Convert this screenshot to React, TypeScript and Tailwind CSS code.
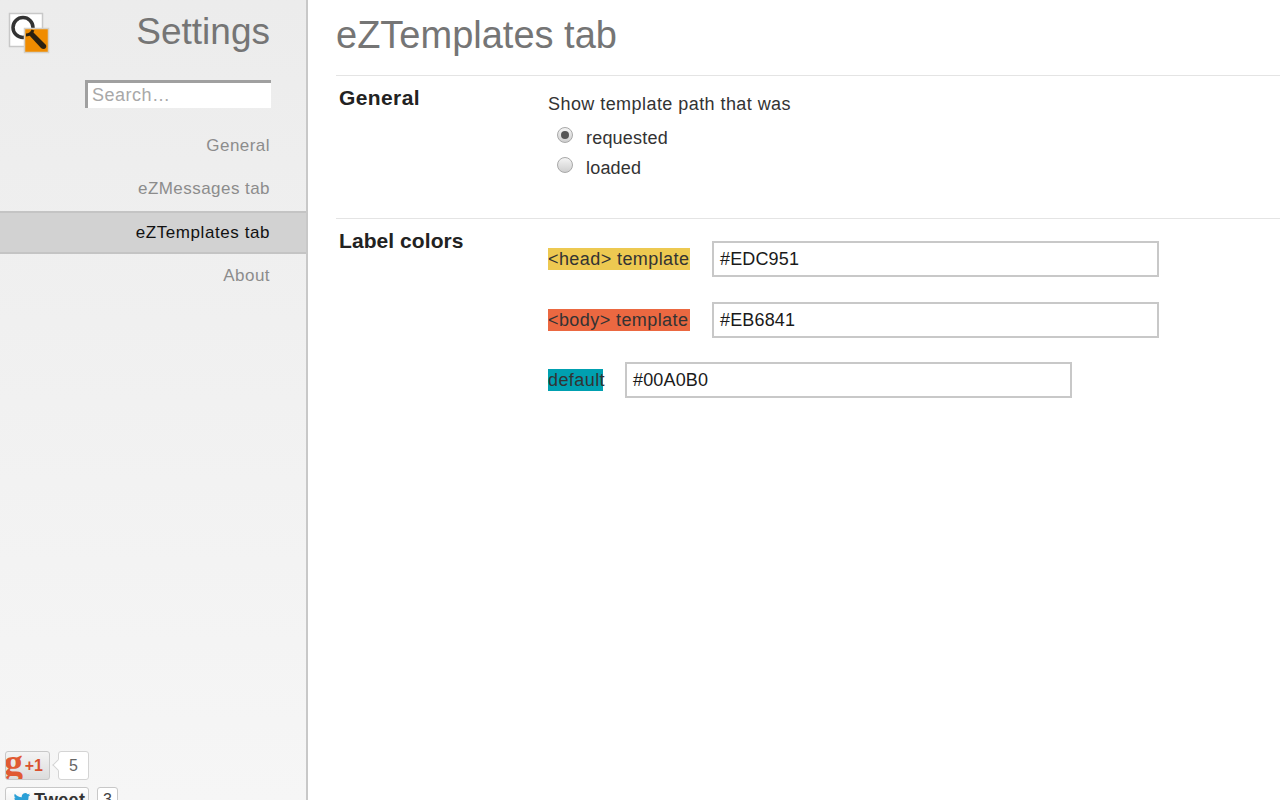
import React from "react";

function Logo() {
  return (
    <svg width="42" height="42" viewBox="0 0 42 42" className="absolute left-[8px] top-[12px]">
      <rect x="1.500" y="1.500" width="33" height="33" fill="#fff" stroke="#c8c8c8" strokeWidth="1.500" />
      <circle cx="15" cy="15.500" r="10" fill="none" stroke="#333" strokeWidth="3.500" />
      <rect x="16.500" y="16.500" width="24" height="24" fill="#f08c00" stroke="#d4d0c8" strokeWidth="1.500" />
      <path d="M18 23 Q23 23 25 18" fill="none" stroke="#2a2010" strokeWidth="3" />
      <path d="M21 23 L25 20 L38 33 Q39 36 36 37 Q34 37 33 36 Z" fill="#2a2010" />
    </svg>
  );
}

function Radio({ checked }: { checked?: boolean }) {
  return (
    <span className="mb-[6px] w-[16px] h-[16px] rounded-full border border-[#a8a8a8] bg-gradient-to-b from-[#f4f4f4] to-[#cfcfcf] flex items-center justify-center shrink-0">
      {checked && <span className="w-[8px] h-[8px] rounded-full bg-[#555]" />}
    </span>
  );
}

function NavItem({ label, active }: { label: string; active?: boolean }) {
  return (
    <div
      className={
        active
          ? "mt-[1px] h-[43px] border-y-2 border-[#c4c4c4] bg-[#d2d2d2] text-[#111] flex items-center justify-end pr-[36px] text-[17px] tracking-[0.57px]"
          : "h-[43px] text-[#8c8c8c] flex items-center justify-end pr-[36px] text-[17px] tracking-[0.45px]"
      }
    >
      {label}
    </div>
  );
}

function ColorRow({ label, bg, value, w }: { label: string; bg: string; value: string; w: string }) {
  return (
    <div className="flex items-center h-[36px]">
      <span className={`${bg} text-[#333] text-[18px] leading-[22px] tracking-[0.42px] ${w} whitespace-pre`}>{label}</span>
      <div className="ml-[22px] w-[447px] h-[36px] border-2 border-[#c8c8c8] bg-white flex items-center pl-[6px] pt-[1px] text-[18px] tracking-[0.15px] text-[#1a1a1a]">
        {value}
      </div>
    </div>
  );
}

export default function App() {
  return (
    <div className="relative flex w-[1280px] h-[800px] overflow-hidden bg-white font-['Liberation_Sans',Arial,sans-serif]">
      <aside className="relative flex flex-col shrink-0 w-[308px] h-[800px] border-r-2 border-[#c8c8c8] bg-gradient-to-b from-[#ececec] to-[#f6f6f6]">
        <Logo />
        <div className="h-[80px] pt-[9px] pr-[36px] text-right text-[37px] leading-[46px] text-[#757575]">Settings</div>
        <div className="flex justify-end pr-[35px]">
          <div className="w-[186px] h-[28px] border-t-[3px] border-l-[3px] border-[#a0a0a0] bg-white pl-[4px] text-[18px] leading-[24px] text-[#a8a8a8] tracking-[0.5px]">
            Search…
          </div>
        </div>
        <div className="mt-[16px] flex flex-col">
          <NavItem label="General" />
          <NavItem label="eZMessages tab" />
          <NavItem label="eZTemplates tab" active />
          <NavItem label="About" />
        </div>
        <div className="mt-auto pl-[5px] flex flex-col gap-[7px] h-[49px]">
          <div className="flex items-center h-[29px] shrink-0">
            <div className="relative w-[45px] h-[29px] rounded-[3px] border border-[#c8c8c8] bg-gradient-to-b from-[#f4f4f4] to-[#dcdcdc] overflow-hidden flex items-center justify-end pr-[6px] text-[16px] font-bold text-[#d9502e]">
              <span className="absolute left-[-2px] top-[-6px] text-[38px] leading-[32px] font-['Liberation_Serif',serif] text-[#e05a33]">g</span>
              +1
            </div>
            <div className="relative ml-[8px] w-[31px] h-[29px] rounded-[3px] border border-[#d4d4d4] bg-white flex items-center justify-center text-[16px] text-[#666]">
              5
              <span className="absolute left-[-5px] top-[9px] w-[8px] h-[8px] rotate-45 border-l border-b border-[#d4d4d4] bg-white" />
            </div>
          </div>
          <div className="flex items-start h-[20px] shrink-0">
            <div className="w-[84px] h-[26px] rounded-[3px] border border-[#c8c8c8] bg-gradient-to-b from-white to-[#e8e8e8] flex items-center pl-[5px] text-[18px] tracking-[0.3px] font-bold text-[#333]">
              <svg width="22" height="18" viewBox="0 0 24 24" className="mr-[1px] shrink-0">
                <path fill="#2a9fd6" d="M23 5a9 9 0 0 1-2.6.7A4.5 4.5 0 0 0 22.400 3.200a9 9 0 0 1-2.900 1.100 4.500 4.500 0 0 0-7.700 4.100A12.800 12.800 0 0 1 2.500 3.700a4.500 4.500 0 0 0 1.400 6 4.500 4.500 0 0 1-2-.6 4.500 4.500 0 0 0 3.600 4.500 4.500 4.500 0 0 1-2 .1 4.500 4.500 0 0 0 4.200 3.100A9 9 0 0 1 1 18.700 12.800 12.800 0 0 0 20.700 7.300 9 9 0 0 0 23 5z" />
              </svg>
              Tweet
            </div>
            <div className="ml-[8px] w-[21px] h-[26px] rounded-[3px] border border-[#c8c8c8] bg-white flex justify-center text-[16px] text-[#444]">3</div>
          </div>
        </div>
      </aside>

      <main className="flex-1 pl-[28px] text-[#333]">
        <h1 className="h-[76px] pt-[12px] text-[38px] leading-[46px] font-normal text-[#757575] border-b border-[#e4e4e4]">eZTemplates tab</h1>

        <section className="flex h-[143px] border-b border-[#e4e4e4]">
          <div className="w-[212px] pl-[3px] pt-[9px] text-[21px] leading-[26px] font-bold text-[#222] tracking-[0.4px]">General</div>
          <div className="pt-[17px] text-[18px] leading-[22px] tracking-[0.44px]">
            <div>Show template path that was</div>
            <div className="flex items-center pl-[9px] mt-[12px] h-[22px] gap-[13px]">
              <Radio checked />
              <span className="tracking-[0.2px]">requested</span>
            </div>
            <div className="flex items-center pl-[9px] mt-[8px] h-[22px] gap-[13px]">
              <Radio />
              <span className="tracking-[0.2px]">loaded</span>
            </div>
          </div>
        </section>

        <section className="flex">
          <div className="w-[212px] pl-[3px] pt-[9px] text-[21px] leading-[26px] font-bold text-[#222] tracking-[0.07px]">Label colors</div>
          <div className="pt-[22.400px] flex flex-col gap-[24.500px]">
            <ColorRow label="<head> template" bg="bg-[#edc951]" value="#EDC951" w="w-[142px]" />
            <ColorRow label="<body> template" bg="bg-[#eb6841]" value="#EB6841" w="w-[142px]" />
            <ColorRow label="default" bg="bg-[#00a0b0]" value="#00A0B0" w="w-[55px]" />
          </div>
        </section>
      </main>
    </div>
  );
}
